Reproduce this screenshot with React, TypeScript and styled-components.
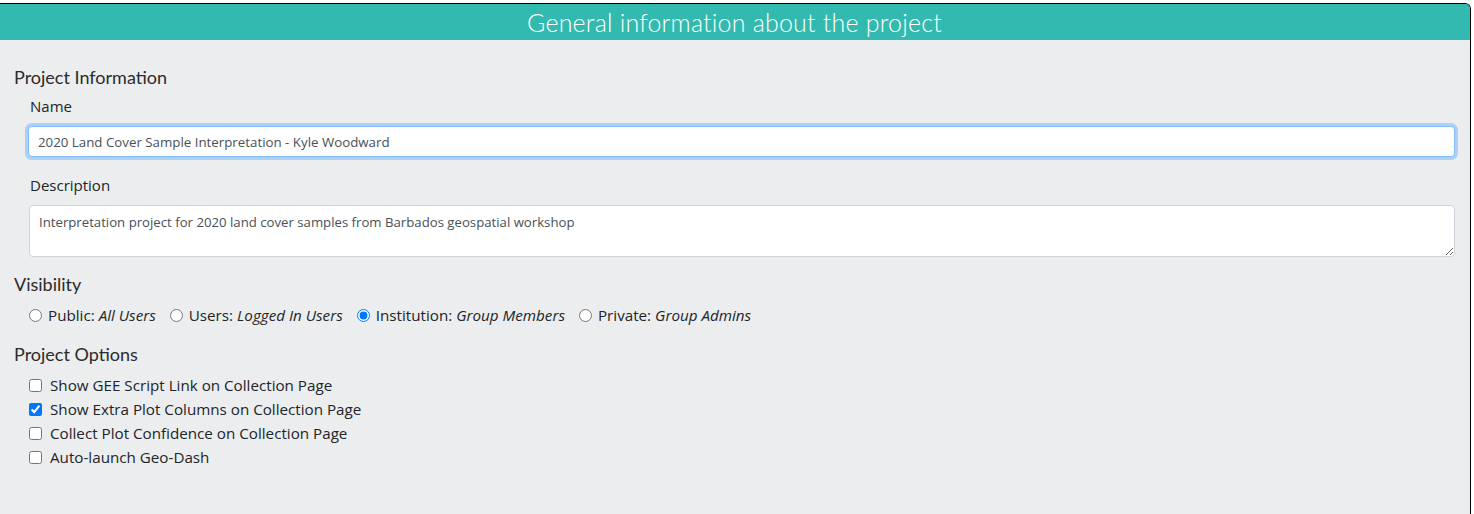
import styled, { createGlobalStyle } from "styled-components";

const GlobalStyle = createGlobalStyle`
  html, body {
    margin: 0;
    padding: 0;
    background: #ffffff;
  }
  body {
    font-family: "Open Sans", "Noto Sans", sans-serif;
    color: #212529;
  }
`;

const Card = styled.div`
  margin: 3px 0 0 -1px;
  width: 1472px;
  height: 515px;
  box-sizing: border-box;
  border-top: 1px solid #000;
  border-right: 1px solid #000;
  border-top-right-radius: 6px;
  background: #ebedef;
  overflow: hidden;
`;

const Header = styled.div`
  height: 36px;
  background: #32bab0;
  color: #ffffff;
  font-family: "Lato", "Liberation Sans", sans-serif;
  font-weight: 300;
  font-size: 25px;
  line-height: 36px;
  text-align: center;
  letter-spacing: 0.2px;
`;

const Body = styled.div`
  padding: 24px 14px 0 15px;
`;

const SectionTitle = styled.h2<{ $gap?: number }>`
  margin: ${(p) => p.$gap ?? 0}px 0 0;
  font-family: "Lato", "Liberation Sans", sans-serif;
  font-weight: 400;
  font-size: 18px;
  line-height: 26px;
  color: #2b2b2b;
`;

const Group = styled.div`
  padding-left: 14px;
`;

const Label = styled.label<{ $gap?: number }>`
  display: block;
  font-size: 15px;
  line-height: 22px;
  margin: ${(p) => p.$gap ?? 5}px 0 9px 2px;
  color: #212529;
`;

const Input = styled.input`
  display: block;
  box-sizing: border-box;
  width: 1427px;
  height: 31px;
  padding: 0 9px;
  font-family: "Open Sans", "Noto Sans", sans-serif;
  font-size: 13.3px;
  color: #495057;
  background: #fff;
  border: 1px solid #80bdff;
  border-radius: 4px;
  box-shadow: 0 0 0 3px rgba(0, 123, 255, 0.25);
  outline: none;
`;

const TextArea = styled.textarea`
  display: block;
  box-sizing: border-box;
  width: 1426px;
  height: 52px;
  margin-left: 1px;
  padding: 7px 9px;
  font-family: "Open Sans", "Noto Sans", sans-serif;
  font-size: 13.2px;
  line-height: 18px;
  color: #495057;
  background: #fff;
  border: 1px solid #ced4da;
  border-radius: 4px;
  resize: vertical;
  outline: none;
`;

const Row = styled.div`
  display: flex;
  align-items: center;
  gap: 14px;
  padding-left: 15px;
  height: 24px;
  margin: 6px 0 14px;
`;

const Option = styled.label`
  display: flex;
  align-items: center;
  gap: 6px;
  font-size: 15.2px;
  color: #212529;

  em {
    margin-left: 4px;
  }
`;

const Radio = styled.input.attrs({ type: "radio" })`
  margin: 0;
  width: 13px;
  height: 13px;
  accent-color: #0075ff;
`;

const CheckList = styled.div`
  display: flex;
  flex-direction: column;
  padding-left: 15px;
  margin-top: 6px;
`;

const Check = styled.label`
  display: flex;
  align-items: center;
  gap: 8px;
  height: 24px;
  font-size: 15.2px;
  color: #212529;
`;

const Box = styled.input.attrs({ type: "checkbox" })`
  margin: 0;
  width: 13px;
  height: 13px;
  accent-color: #0075ff;
`;

const visibility = [
  { name: "Public", who: "All Users", on: false },
  { name: "Users", who: "Logged In Users", on: false },
  { name: "Institution", who: "Group Members", on: true },
  { name: "Private", who: "Group Admins", on: false },
];

const options = [
  { text: "Show GEE Script Link on Collection Page", on: false },
  { text: "Show Extra Plot Columns on Collection Page", on: true },
  { text: "Collect Plot Confidence on Collection Page", on: false },
  { text: "Auto-launch Geo-Dash", on: false },
];

export default function App() {
  return (
    <>
      <GlobalStyle />
      <Card>
        <Header>General information about the project</Header>
        <Body>
          <SectionTitle>Project Information</SectionTitle>
          <Group>
            <Label>Name</Label>
            <Input
              readOnly
              value="2020 Land Cover Sample Interpretation - Kyle Woodward"
            />
            <Label $gap={17}>Description</Label>
            <TextArea
              readOnly
              value="Interpretation project for 2020 land cover samples from Barbados geospatial workshop"
            />
          </Group>
          <SectionTitle $gap={14}>Visibility</SectionTitle>
          <Row>
            {visibility.map((v) => (
              <Option key={v.name}>
                <Radio name="vis" defaultChecked={v.on} />
                <span>
                  {v.name}:<em>{v.who}</em>
                </span>
              </Option>
            ))}
          </Row>
          <SectionTitle>Project Options</SectionTitle>
          <CheckList>
            {options.map((o) => (
              <Check key={o.text}>
                <Box defaultChecked={o.on} />
                {o.text}
              </Check>
            ))}
          </CheckList>
        </Body>
      </Card>
    </>
  );
}
